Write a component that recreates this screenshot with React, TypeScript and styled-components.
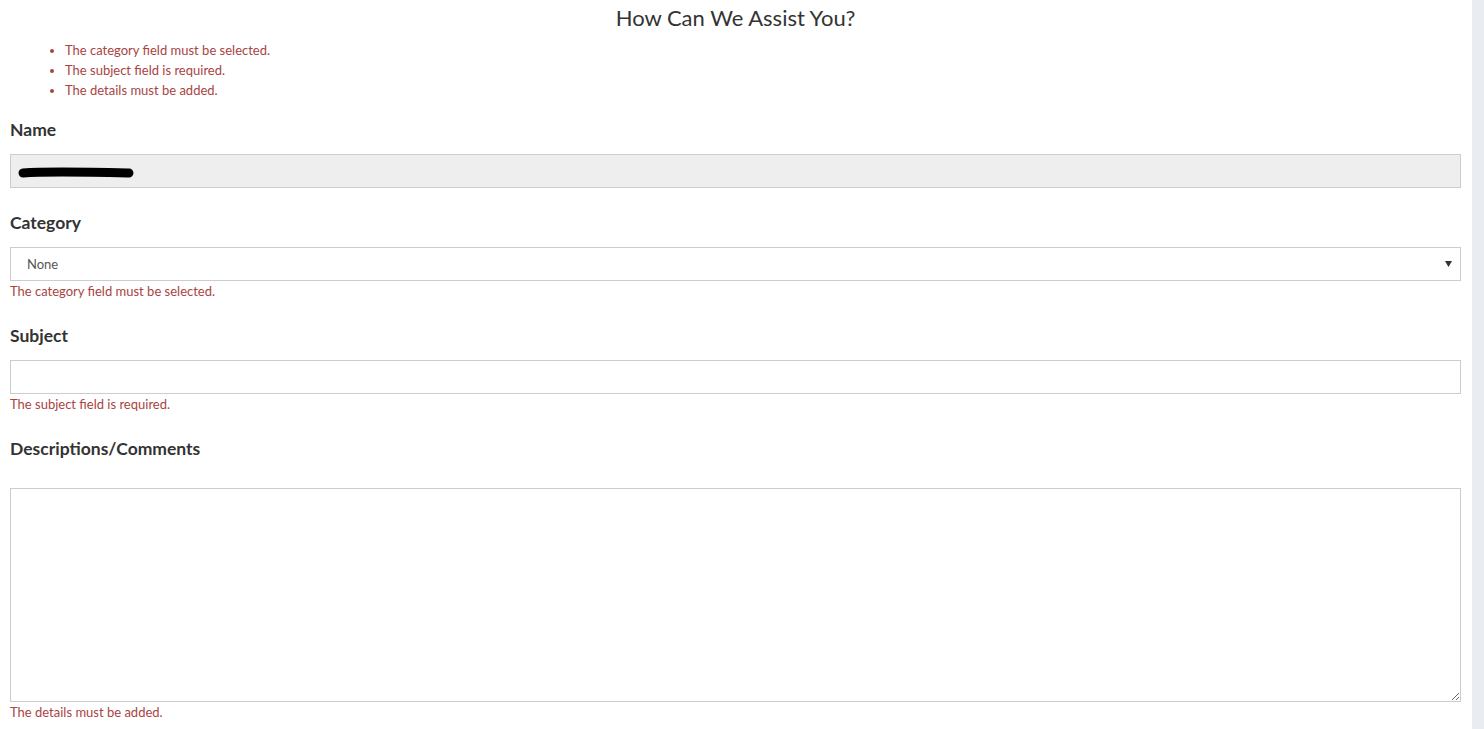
import React from "react";
import styled, { createGlobalStyle } from "styled-components";

const Global = createGlobalStyle`
  html, body { margin: 0; padding: 0; background: #fff; }
  body { font-family: Lato, "Open Sans", "Liberation Sans", sans-serif; color: #333; }
  * { box-sizing: border-box; }
`;

const Page = styled.div`
  display: flex;
  width: 100%;
  height: 729px;
  overflow: hidden;
`;

const Main = styled.main`
  flex: 1;
  padding: 0 11px 0 10px;
`;

const ScrollTrack = styled.div`
  width: 12px;
  background: #e9ecf1;
`;

const Title = styled.h2`
  margin: 0;
  text-align: center;
  font-size: 22px;
  font-weight: 400;
  line-height: 36px;
  color: #333;
`;

const ErrorList = styled.ul`
  margin: 4px 0 0;
  padding-left: 55px;
  list-style: disc;
  color: #a94442;
  font-size: 13px;
  line-height: 20px;
`;

const Group = styled.div<{ $top: number }>`
  margin-top: ${(p) => p.$top}px;
`;

const Label = styled.label<{ $gap?: number }>`
  display: block;
  font-size: 17.5px;
  font-weight: 700;
  line-height: 20px;
  color: #333;
  margin-bottom: ${(p) => p.$gap ?? 14}px;
`;

const Input = styled.div<{ $disabled?: boolean }>`
  height: 34px;
  border: 1px solid #ccc;
  background: ${(p) => (p.$disabled ? "#eee" : "#fff")};
  display: flex;
  align-items: center;
  padding: 3px 7px 0;
`;

const SelectWrap = styled.div`
  position: relative;
`;

const Select = styled.select`
  appearance: none;
  width: 100%;
  height: 34px;
  border: 1px solid #ccc;
  border-radius: 0;
  background: #fff;
  padding: 0 0 0 16px;
  font-family: inherit;
  font-size: 13px;
  color: #555;
  outline: none;
`;

const Arrow = styled.svg`
  position: absolute;
  right: 9px;
  top: 14px;
  pointer-events: none;
`;

const TextArea = styled.textarea`
  display: block;
  width: 100%;
  height: 214px;
  border: 1px solid #ccc;
  border-radius: 0;
  font-family: inherit;
  resize: vertical;
  outline: none;
  margin: 0;
`;

const Help = styled.div`
  color: #a94442;
  font-size: 13px;
  line-height: 20px;
`;

export default function App() {
  return (
    <Page>
      <Global />
      <Main>
        <Title>How Can We Assist You?</Title>
        <ErrorList>
          <li>The category field must be selected.</li>
          <li>The subject field is required.</li>
          <li>The details must be added.</li>
        </ErrorList>

        <Group $top={20}>
          <Label>Name</Label>
          <Input $disabled>
            <svg width="116" height="14" viewBox="0 0 116 14">
              <path d="M5 7 C30 5, 70 6, 111 7" stroke="#000" strokeWidth="9" strokeLinecap="round" fill="none" />
            </svg>
          </Input>
        </Group>

        <Group $top={25}>
          <Label>Category</Label>
          <SelectWrap>
            <Select defaultValue="none">
              <option value="none">None</option>
            </Select>
            <Arrow width="7" height="6" viewBox="0 0 7 6">
              <path d="M0 0 H7 L3.5 6 Z" fill="#333" />
            </Arrow>
          </SelectWrap>
          <Help>The category field must be selected.</Help>
        </Group>

        <Group $top={25}>
          <Label>Subject</Label>
          <Input />
          <Help>The subject field is required.</Help>
        </Group>

        <Group $top={25}>
          <Label $gap={29}>Descriptions/Comments</Label>
          <TextArea />
          <Help>The details must be added.</Help>
        </Group>
      </Main>
      <ScrollTrack />
    </Page>
  );
}
